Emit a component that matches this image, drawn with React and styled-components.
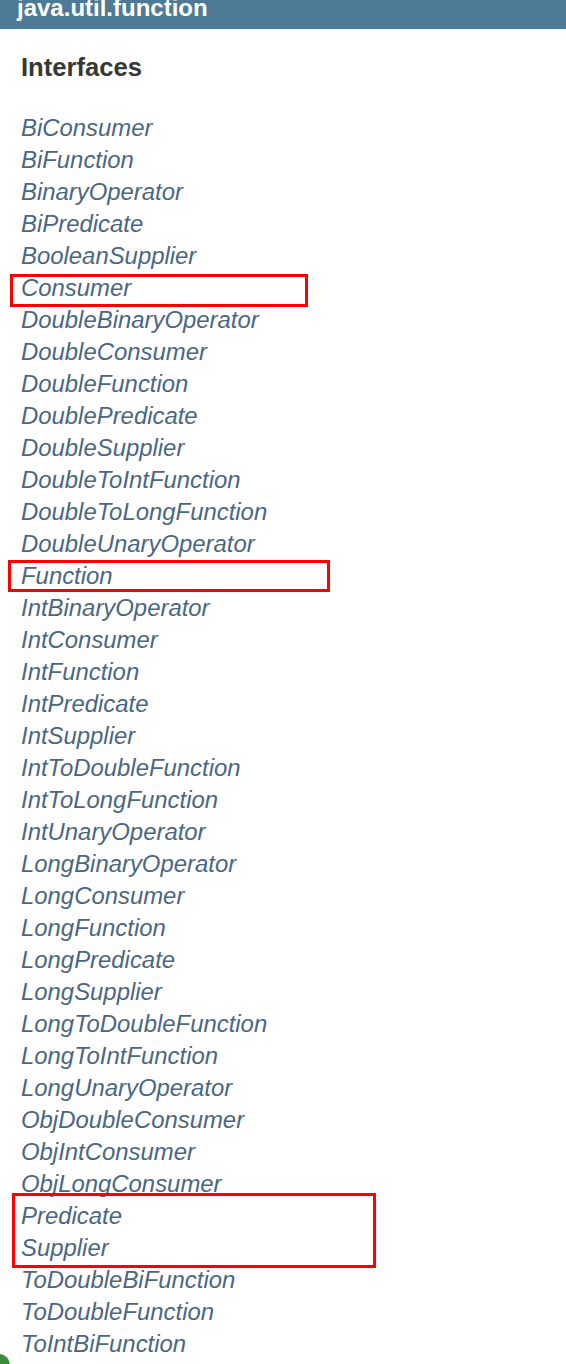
import React from "react";
import styled, { createGlobalStyle } from "styled-components";

const Global = createGlobalStyle`
  html, body { margin: 0; padding: 0; background: #ffffff; }
  body { font-family: "Liberation Sans", Arial, sans-serif; overflow: hidden; }
`;

const Page = styled.div`
  position: relative;
  width: 566px;
  height: 1364px;
  overflow: hidden;
  background: #ffffff;
`;

const Header = styled.div`
  height: 29px;
  background: #4d7a97;
  overflow: hidden;
  padding-left: 17px;
`;

const Title = styled.div`
  color: #ffffff;
  font-weight: 700;
  font-size: 24px;
  line-height: 15px;
  white-space: nowrap;
`;

const Content = styled.div`
  display: flex;
  flex-direction: column;
  padding: 22px 0 0 21px;
`;

const Heading = styled.h2`
  margin: 0 0 29px 0;
  font-size: 25.6px;
  line-height: 32px;
  font-weight: 700;
  color: #353833;
`;

const List = styled.div`
  display: flex;
  flex-direction: column;
`;

const Item = styled.div`
  font-size: 23.9px;
  line-height: 32px;
  font-style: italic;
  color: #4a6782;
  white-space: nowrap;
`;

const Link = styled.a`
  color: inherit;
  text-decoration: none;
`;

const Marked = styled.div`
  position: relative;
  display: flex;
  flex-direction: column;
  &::after {
    content: "";
    position: absolute;
    left: ${(p) => p.$dx}px;
    top: ${(p) => p.$dy}px;
    width: ${(p) => p.$w}px;
    height: ${(p) => p.$h}px;
    border: 3px solid #ff0000;
    box-sizing: border-box;
    pointer-events: none;
  }
`;

const Corner = styled.div`
  position: absolute;
  left: -12px;
  bottom: -12px;
  width: 22px;
  height: 22px;
  border-radius: 50%;
  background: #3d8b3d;
`;

const items = [
  "BiConsumer", "BiFunction", "BinaryOperator", "BiPredicate", "BooleanSupplier",
  ["Consumer"], "DoubleBinaryOperator", "DoubleConsumer", "DoubleFunction",
  "DoublePredicate", "DoubleSupplier", "DoubleToIntFunction", "DoubleToLongFunction",
  "DoubleUnaryOperator", ["Function"], "IntBinaryOperator", "IntConsumer", "IntFunction",
  "IntPredicate", "IntSupplier", "IntToDoubleFunction", "IntToLongFunction",
  "IntUnaryOperator", "LongBinaryOperator", "LongConsumer", "LongFunction",
  "LongPredicate", "LongSupplier", "LongToDoubleFunction", "LongToIntFunction",
  "LongUnaryOperator", "ObjDoubleConsumer", "ObjIntConsumer", "ObjLongConsumer",
  ["Predicate", "Supplier"], "ToDoubleBiFunction", "ToDoubleFunction", "ToIntBiFunction",
];

const marks = {
  Consumer: { dx: -11, dy: 2, w: 298, h: 33 },
  Function: { dx: -13, dy: 0, w: 322, h: 32 },
  Predicate: { dx: -9, dy: -7, w: 364, h: 75 },
};

const Entry = ({ name }) => (
  <Item>
    <Link href="#">{name}</Link>
  </Item>
);

export default function App() {
  return (
    <Page>
      <Global />
      <Header>
        <Title>java.util.function</Title>
      </Header>
      <Content>
        <Heading>Interfaces</Heading>
        <List>
          {items.map((entry) => {
            if (Array.isArray(entry)) {
              const m = marks[entry[0]];
              return (
                <Marked key={entry[0]} $dx={m.dx} $dy={m.dy} $w={m.w} $h={m.h}>
                  {entry.map((n) => (
                    <Entry key={n} name={n} />
                  ))}
                </Marked>
              );
            }
            return <Entry key={entry} name={entry} />;
          })}
        </List>
      </Content>
      <Corner />
    </Page>
  );
}
